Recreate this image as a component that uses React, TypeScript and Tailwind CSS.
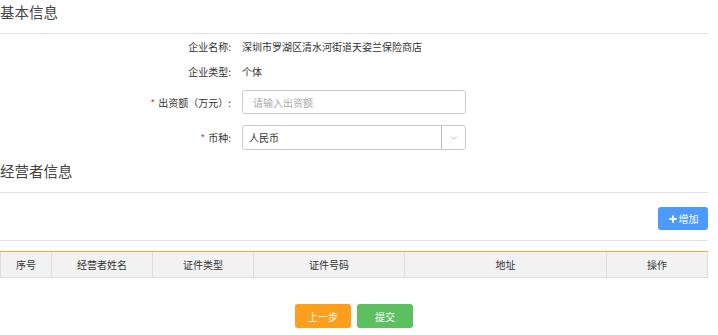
import {ChevronDown, Plus} from "lucide-react";

const font = {fontFamily: '"Microsoft YaHei", "Noto Sans CJK SC", "Noto Sans", sans-serif'};

function Row({label, required, children}: {label: string; required?: boolean; children: React.ReactNode}) {
    return (
        <div className="flex items-center">
            <div className="w-[232px] pr-[1px] text-right text-[10px] text-[#333]">
                {required && <span className="text-[#e4393c] mr-[3px]">*</span>}
                {label}
            </div>
            <div className="ml-[10px] text-[10px] text-[#333]">{children}</div>
        </div>
    );
}

const columns = [
    {title: "序号", w: "w-[51px]"},
    {title: "经营者姓名", w: "w-[101px]"},
    {title: "证件类型", w: "w-[101px]"},
    {title: "证件号码", w: "w-[151px]"},
    {title: "地址", w: "w-[202px]"},
    {title: "操作", w: "flex-1"},
];

export default function App() {
    return (
        <div className="w-[708px] bg-white" style={font}>
            <h2 className="h-[34px] pt-[1px] leading-[22px] text-[14.5px] text-[#444] border-b border-[#e2e2e2]">基本信息</h2>

            <div className="h-[24px] flex items-center"><Row label="企业名称:">深圳市罗湖区清水河街道天姿兰保险商店</Row></div>
            <div className="h-[25px] mt-[1px] flex items-center"><Row label="企业类型:">个体</Row></div>
            <div className="mt-[6px]">
                <Row label="出资额（万元）:" required>
                    <input placeholder="请输入出资额"
                           className="w-[224px] h-[24px] px-[10px] rounded-[3px] border border-[#ccc] text-[10px] placeholder:text-[#aaa] outline-none"/>
                </Row>
            </div>
            <div className="mt-[11px]">
                <Row label="币种:" required>
                    <div className="w-[224px] h-[25px] rounded-[3px] border border-[#ccc] flex items-center">
                        <span className="flex-1 px-[6px]">人民币</span>
                        <span className="w-[24px] h-full border-l border-[#bbb] flex items-center justify-center">
                            <ChevronDown className="w-[10px] h-[10px] text-[#999]" strokeWidth={1.5}/>
                        </span>
                    </div>
                </Row>
            </div>

            <h2 className="h-[43px] flex items-center text-[14.5px] text-[#444] border-b border-[#e2e2e2]">经营者信息</h2>

            <div className="h-[48px] flex justify-end items-center pt-[4px] border-b border-[#e2e2e2]">
                <button className="w-[50px] h-[23px] rounded-[3px] bg-[#4c9bfc] text-white text-[10px] flex items-center justify-center">
                    <Plus className="w-[10px] h-[10px] mr-[1px]" strokeWidth={4.5}/>增加
                </button>
            </div>

            <div className="mt-[10px] flex border-t border-[#f5a93b] bg-[#f2f2f2] border-b border-b-[#ddd] h-[27px]">
                {columns.map((c, i) => (
                    <div key={c.title}
                         className={`${c.w} flex items-center justify-center text-[10px] text-[#333] border-l border-[#ddd] ${i === columns.length - 1 ? "border-r" : ""}`}>
                        {c.title}
                    </div>
                ))}
            </div>

            <div className="mt-[26px] flex justify-center gap-[6px]">
                <button className="w-[56px] h-[24px] rounded-[3px] bg-[#fd9f1c] text-white text-[10px]">上一步</button>
                <button className="w-[56px] h-[24px] rounded-[3px] bg-[#5cbf60] text-white text-[10px]">提交</button>
            </div>
        </div>
    );
}
